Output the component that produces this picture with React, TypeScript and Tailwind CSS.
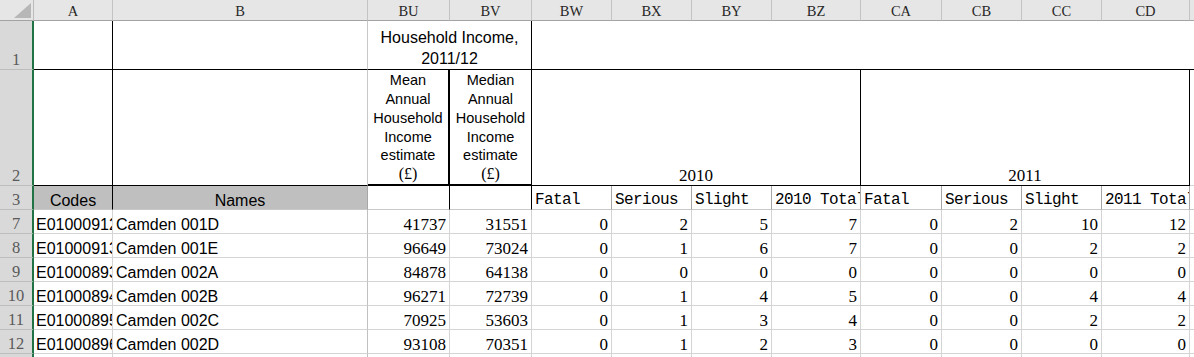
import React from 'react';
import clsx from 'clsx';

const SANS = "font-['Liberation_Sans',Arial,sans-serif]";
const SERIF = "font-['Liberation_Serif','Times_New_Roman',serif]";
const MONO = "font-['Liberation_Mono','Courier_New',monospace]";

const W = {
  RH: 'w-[34px]',
  A: 'w-[79px]',
  B: 'w-[255px]',
  BU: 'w-[82px]',
  BV: 'w-[82px]',
  BW: 'w-[80px]',
  BX: 'w-[80px]',
  BY: 'w-[80px]',
  BZ: 'w-[89px]',
  CA: 'w-[81px]',
  CB: 'w-[80px]',
  CC: 'w-[80px]',
  CD: 'w-[88px]',
};

const dataCols: (keyof typeof W)[] = ['BU', 'BV', 'BW', 'BX', 'BY', 'BZ', 'CA', 'CB', 'CC', 'CD'];
const headerCols: (keyof typeof W)[] = ['A', 'B', 'BU', 'BV', 'BW', 'BX', 'BY', 'BZ', 'CA', 'CB', 'CC', 'CD'];

type Row = { n: number; code?: string; name?: string; v?: number[] };

const rows: Row[] = [
  { n: 7, code: 'E01000912', name: 'Camden 001D', v: [41737, 31551, 0, 2, 5, 7, 0, 2, 10, 12] },
  { n: 8, code: 'E01000913', name: 'Camden 001E', v: [96649, 73024, 0, 1, 6, 7, 0, 0, 2, 2] },
  { n: 9, code: 'E01000893', name: 'Camden 002A', v: [84878, 64138, 0, 0, 0, 0, 0, 0, 0, 0] },
  { n: 10, code: 'E01000894', name: 'Camden 002B', v: [96271, 72739, 0, 1, 4, 5, 0, 0, 4, 4] },
  { n: 11, code: 'E01000895', name: 'Camden 002C', v: [70925, 53603, 0, 1, 3, 4, 0, 0, 2, 2] },
  { n: 12, code: 'E01000896', name: 'Camden 002D', v: [93108, 70351, 0, 1, 2, 3, 0, 0, 0, 0] },
  { n: 13 },
];

function C({ w, className, children }: { w?: string; className?: string; children?: React.ReactNode }) {
  return (
    <div className={clsx('shrink-0 overflow-hidden whitespace-nowrap flex', w ?? 'flex-1 min-w-0', className)}>
      {children}
    </div>
  );
}

function RowHead({ n, className }: { n?: number; className?: string }) {
  return (
    <C
      w={W.RH}
      className={clsx(
        'bg-[#d9d9d9] border-b border-b-[#bdbdbd] border-r-2 border-r-[#217346] items-end justify-center text-[16.5px] leading-[18px] text-[#595959]',
        SERIF,
        className
      )}
    >
      {n}
    </C>
  );
}

export default function App() {
  return (
    <div className={clsx('w-[1194px] h-[357px] overflow-hidden bg-white text-black', SANS)}>
      {/* column header */}
      <div className="flex h-[21px]">
        <C w={W.RH} className="bg-[#e6e6e6] border-r border-b border-r-[#bcbcbc] border-b-[#a3a3a3] relative">
          <svg className="absolute left-[14px] top-[3px]" width="17" height="15" viewBox="0 0 17 15">
            <polygon points="17,0 17,15 0,15" fill="#b7b7b7" />
          </svg>
        </C>
        {headerCols.map((k) => (
          <C
            key={k}
            w={W[k]}
            className={clsx(
              'bg-[#e6e6e6] border-r border-b border-r-[#c3c3c3] border-b-[#a3a3a3] items-center justify-center pt-[2px] text-[14.5px] leading-[18px] text-[#262626]',
              SERIF
            )}
          >
            {k}
          </C>
        ))}
        <C className="bg-[#e6e6e6] border-b border-b-[#a3a3a3]" />
      </div>

      {/* row 1 */}
      <div className="flex h-[49px]">
        <RowHead n={1} />
        <C w={W.A} className="border-r border-b border-black" />
        <C w={W.B} className="border-r border-b border-r-[#c8c8c8] border-b-black" />
        <C
          w="w-[164px]"
          className="border-r border-b border-black flex-col items-center justify-end text-[16px] leading-[21px] text-center"
        >
          <span>Household Income,</span>
          <span>2011/12</span>
        </C>
        <C className="border-b border-black" />
      </div>

      {/* row 2 */}
      <div className="flex h-[116px]">
        <RowHead n={2} />
        <C w={W.A} className="border-r border-b border-black" />
        <C w={W.B} className="border-r border-b border-r-[#c8c8c8] border-b-black" />
        <C
          w={W.BU}
          className="border-r-2 border-b-2 border-black flex-col items-center justify-end text-[14.5px] leading-[18.8px] text-center"
        >
          <span>Mean</span>
          <span>Annual</span>
          <span>Household</span>
          <span>Income</span>
          <span>estimate</span>
          <span className={clsx(SERIF, 'text-[16px]')}>(£)</span>
        </C>
        <C
          w={W.BV}
          className="border-r border-b-2 border-black flex-col items-center justify-end text-[14.5px] leading-[18.8px] text-center"
        >
          <span>Median</span>
          <span>Annual</span>
          <span>Household</span>
          <span>Income</span>
          <span>estimate</span>
          <span className={clsx(SERIF, 'text-[16px]')}>(£)</span>
        </C>
        <C
          w="w-[329px]"
          className={clsx('border-r border-b border-black items-end justify-center text-[17px] leading-[18px]', SERIF)}
        >
          2010
        </C>
        <C
          w="w-[329px]"
          className={clsx('border-r border-b border-black items-end justify-center text-[17px] leading-[18px]', SERIF)}
        >
          2011
        </C>
        <C className="border-b border-b-[#d4d4d4]" />
      </div>

      {/* row 3 */}
      <div className="flex h-[24px]">
        <RowHead n={3} />
        <C w={W.A} className="bg-[#bfbfbf] border-r border-b border-r-black border-b-[#c8c8c8] items-end justify-center text-[16px] leading-[17px]">
          Codes
        </C>
        <C w={W.B} className="bg-[#bfbfbf] border-r border-b border-r-[#a6a6a6] border-b-[#c8c8c8] items-end justify-center text-[16px] leading-[17px]">
          Names
        </C>
        <C w={W.BU} className="border-r border-b border-r-black border-b-[#c8c8c8]" />
        <C w={W.BV} className="border-r border-b border-r-black border-b-[#c8c8c8]" />
        {[
          ['BW', 'Fatal'],
          ['BX', 'Serious'],
          ['BY', 'Slight'],
          ['BZ', '2010 Total'],
          ['CA', 'Fatal'],
          ['CB', 'Serious'],
          ['CC', 'Slight'],
          ['CD', '2011 Total'],
        ].map(([k, t], i) => (
          <C
            key={i}
            w={W[k as keyof typeof W]}
            className={clsx(
              'border-r border-b border-r-[#a6a6a6] border-b-[#c8c8c8] items-end pl-[3px] text-[16px] leading-[18px] tracking-[-0.6px]',
              MONO
            )}
          >
            {t}
          </C>
        ))}
        <C className="border-b border-b-[#c8c8c8]" />
      </div>

      {/* data rows */}
      {rows.map((r) => (
        <div key={r.n} className="flex h-[24px]">
          <RowHead n={r.n} />
          <C w={W.A} className="border-r border-b border-[#d4d4d4] items-end pl-[2px] text-[16px] leading-[17px]">
            {r.code}
          </C>
          <C w={W.B} className="border-r border-b border-r-[#c0c0c0] border-b-[#d4d4d4] items-end pl-[3px] text-[16px] leading-[17px]">
            {r.name}
          </C>
          {dataCols.map((k, i) => (
            <C
              key={k}
              w={W[k]}
              className={clsx(
                'border-r border-b border-[#d4d4d4] items-end justify-end pr-[3px] text-[17px] leading-[17px]',
                SERIF
              )}
            >
              {r.v ? r.v[i] : null}
            </C>
          ))}
          <C className="border-b border-[#d4d4d4]" />
        </div>
      ))}
    </div>
  );
}
